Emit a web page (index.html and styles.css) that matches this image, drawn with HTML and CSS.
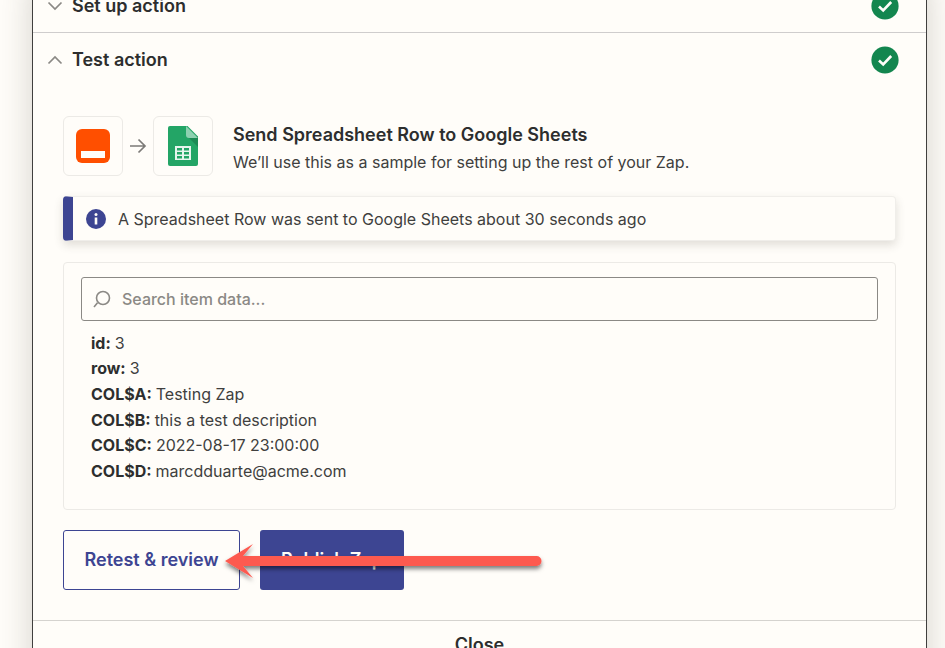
FILE: index.html
```html
<!DOCTYPE html>
<html lang="en">
<head>
<meta charset="utf-8">
<title>Test action</title>
<link rel="stylesheet" href="styles.css">
</head>
<body>
<div class="stage">
  <main class="panel">
    <section class="section-head collapsed">
      <svg class="chev" viewBox="0 0 16 10" width="16" height="10"><path d="M1.500 1.500 8 8l6.500-6.500" fill="none" stroke="#8b8985" stroke-width="1.700"/></svg>
      <h2 class="section-title">Set up action</h2>
      <svg class="status" viewBox="0 0 28 28" width="28" height="28"><circle cx="14" cy="14" r="13.600" fill="#13864f"/><path d="M8 14.500l4.200 4L20.200 10" fill="none" stroke="#fffdf9" stroke-width="2.600"/></svg>
    </section>
    <section class="section-head open">
      <svg class="chev" viewBox="0 0 16 10" width="16" height="10"><path d="M1.500 8.500 8 2l6.500 6.500" fill="none" stroke="#8b8985" stroke-width="1.700"/></svg>
      <h2 class="section-title">Test action</h2>
      <svg class="status" viewBox="0 0 28 28" width="28" height="28"><circle cx="14" cy="14" r="13.600" fill="#13864f"/><path d="M8 14.500l4.200 4L20.200 10" fill="none" stroke="#fffdf9" stroke-width="2.600"/></svg>
    </section>
    <div class="body">
      <div class="summary">
        <div class="app-box">
          <svg viewBox="0 0 34 34" width="34" height="34"><rect width="34" height="34" rx="6" fill="#ff4f00"/><rect x="5" y="22" width="24" height="7" fill="#fffdf9"/></svg>
        </div>
        <svg class="flow-arrow" viewBox="0 0 18 16" width="18" height="16"><path d="M1 8h15M9.500 1.500 16 8l-6.500 6.500" fill="none" stroke="#7c7a77" stroke-width="1.700"/></svg>
        <div class="app-box">
          <svg viewBox="0 0 30 40" width="30" height="40"><path d="M2 0h17.500L30 10.500V38a2 2 0 0 1-2 2H2a2 2 0 0 1-2-2V2a2 2 0 0 1 2-2z" fill="#23a566"/><path d="M19.500 10.500 30 21V10.500z" fill="#1c8a55"/><path d="M18 0l12 12h-9a3 3 0 0 1-3-3z" fill="#8ed1b1"/><path d="M7 20h16v14H7z" fill="#e6f5ee"/><path d="M9 22h5v2.500H9zM16 22h5v2.500h-5zM9 26h5v2.500H9zM16 26h5v2.500h-5zM9 30h5v2.500H9zM16 30h5v2.500h-5z" fill="#23a566"/></svg>
        </div>
        <div class="summary-text">
          <h3 class="summary-title">Send Spreadsheet Row to Google Sheets</h3>
          <p class="summary-sub">We’ll use this as a sample for setting up the rest of your Zap.</p>
        </div>
      </div>
      <div class="alert">
        <svg class="info" viewBox="0 0 20 20" width="20" height="20"><circle cx="10" cy="10" r="10" fill="#3d4592"/><circle cx="10" cy="5.600" r="1.500" fill="#fffdf9"/><rect x="8.700" y="8.500" width="2.600" height="7" fill="#fffdf9"/></svg>
        <span>A Spreadsheet Row was sent to Google Sheets about 30 seconds ago</span>
      </div>
      <div class="data-card">
        <div class="search">
          <svg viewBox="0 0 20 20" width="20" height="20"><circle cx="11" cy="9" r="6.500" fill="none" stroke="#8b8985" stroke-width="1.600"/><path d="M5.500 13.800 2 18" fill="none" stroke="#8b8985" stroke-width="1.600"/></svg>
          <span class="placeholder">Search item data...</span>
        </div>
        <dl class="fields">
          <div class="field"><dt>id:</dt><dd>3</dd></div>
          <div class="field"><dt>row:</dt><dd>3</dd></div>
          <div class="field"><dt>COL$A:</dt><dd>Testing Zap</dd></div>
          <div class="field"><dt>COL$B:</dt><dd>this a test description</dd></div>
          <div class="field"><dt>COL$C:</dt><dd>2022-08-17 23:00:00</dd></div>
          <div class="field"><dt>COL$D:</dt><dd>marcdduarte@acme.com</dd></div>
        </dl>
      </div>
      <div class="actions">
        <button class="btn btn-outline" type="button">Retest &amp; review</button>
        <button class="btn btn-solid" type="button">Publish Zap</button>
      </div>
    </div>
    <footer class="close-row">Close</footer>
  </main>
  <svg class="callout" viewBox="0 0 330 52" width="330" height="52">
    <defs><filter id="sh" x="-5%" y="-30%" width="110%" height="170%"><feDropShadow dx="0" dy="3" stdDeviation="2" flood-color="#000" flood-opacity=".5"/></filter></defs>
    <path d="M5 25 33 8 23 20h293.500a5 5 0 0 1 0 10H23l10 12z" fill="#fd5a50" filter="url(#sh)"/>
  </svg>
</div>
</body>
</html>
```
FILE: styles.css
```css
* { box-sizing: border-box; }
html, body { margin: 0; padding: 0; }
body { background: #fffdf9; font-family: Inter, "Liberation Sans", sans-serif; color: #2d2e2e; }
.stage { position: relative; width: 945px; height: 648px; overflow: hidden; background: #fffdf9; }
.panel {
  margin: -20px 0 0 32px; width: 895px; height: 720px;
  border-left: 1px solid #403f3e; border-right: 1px solid #403f3e;
  background: #fffdf9;
  box-shadow: 0 0 32px rgba(60, 55, 45, .22);
}
.section-head { display: flex; align-items: center; padding: 0 27px 0 14px; }
.section-head.collapsed { height: 53px; border-bottom: 1px solid #cfcdcd; }
.section-head.open { height: 54px; }
.chev { flex: none; margin-right: 9px; }
.section-title { flex: 1; margin: 0; font-size: 18px; font-weight: 600; line-height: 24px; color: #2d2e2e; }
.status { flex: none; }
.body { padding: 29px 30px 0 30px; }
.summary { display: flex; align-items: center; }
.app-box { width: 60px; height: 60px; border: 1px solid #eceae6; border-radius: 6px; display: flex; align-items: center; justify-content: center; }
.flow-arrow { margin: 0 6px; }
.summary-text { margin-left: 20px; padding-top: 5px; }
.summary-title { margin: 0; font-size: 18px; font-weight: 600; line-height: 24px; }
.summary-sub { margin: 3px 0 0; font-size: 16px; line-height: 24px; color: #403f3e; }
.alert {
  display: flex; align-items: center; height: 45px; margin-top: 20px; padding-left: 13px;
  border: 1px solid #f0eeea; border-left: 10px solid #3d4592; border-radius: 4px;
  background: #fffdf9; box-shadow: 0 4px 10px rgba(60, 55, 45, .16);
  font-size: 16px; color: #403f3e;
}
.info { flex: none; margin-right: 12px; }
.data-card { height: 248px; margin-top: 21px; padding: 14px 17px; border: 1px solid #eceae6; border-radius: 4px; }
.search { display: flex; align-items: center; height: 44px; padding-left: 10px; border: 1px solid #8b8985; border-radius: 3px; }
.placeholder { margin-left: 10px; font-size: 16px; font-weight: 500; color: #8b8985; }
.fields { margin: 9px 0 0 10px; }
.field { display: flex; height: 25.600px; align-items: center; font-size: 16px; color: #403f3e; }
.field dt { font-weight: 700; color: #2d2e2e; margin-right: 4px; }
.field dd { margin: 0; }
.actions { display: flex; gap: 20px; margin-top: 20px; }
.btn { height: 60px; border-radius: 3px; font-family: inherit; font-size: 18px; font-weight: 600; padding: 0 0 2px; }
.btn-outline { width: 177px; background: #fffdf9; border: 1px solid #3d4592; color: #3d4592; }
.btn-solid { width: 144px; background: #3d4592; border: 0; color: #fffdf9; }
.close-row { margin-top: 30px; height: 60px; border-top: 1px solid #d5d3cf; text-align: center; padding-top: 13px; font-size: 18px; font-weight: 600; }
.callout { position: absolute; left: 220px; top: 536px; }
```
